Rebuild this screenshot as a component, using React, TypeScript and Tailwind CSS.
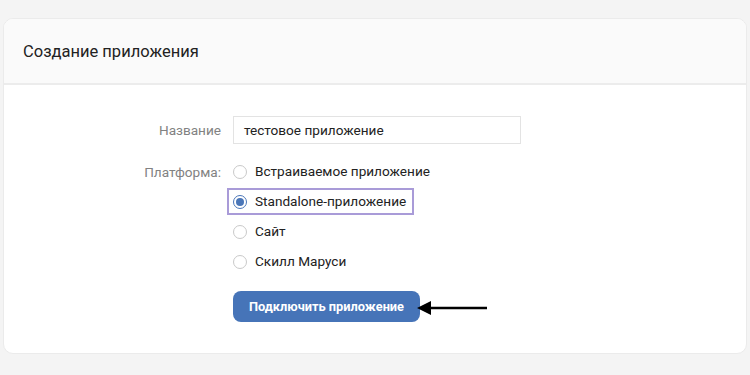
export default function App() {
  const options = [
    { label: 'Встраиваемое приложение', checked: false },
    { label: 'Standalone-приложение', checked: true },
    { label: 'Сайт', checked: false },
    { label: 'Скилл Маруси', checked: false },
  ];

  return (
    <div className="w-[750px] h-[375px] bg-[#f4f4f4] pt-[18px] px-[3px] font-['Roboto',sans-serif] overflow-hidden">
      {/* Card */}
      <div className="w-[744px] h-[336px] bg-white rounded-[10px] border border-[#ebebeb] overflow-hidden">
        <div className="h-[66px] bg-[#fafafa] border-b-2 border-[#ececec] flex items-center pl-[19px] pt-[2px]">
          <h1 className="text-[16.5px] text-[#222] leading-none">Создание приложения</h1>
        </div>

        <div className="pt-[31px] pl-[120px]">
          {/* Name row */}
          <div className="flex items-center">
            <div className="w-[97px] text-right text-[13.6px] text-[#828282]">Название</div>
            <div className="ml-[12px] w-[288px] h-[28px] border border-[#e3e3e3] flex items-center pl-[10px] text-[13.6px] text-[#222]">
              тестовое приложение
            </div>
          </div>

          {/* Platform */}
          <div className="flex mt-[14px]">
            <div className="w-[97px] text-right text-[13.6px] text-[#828282] pt-[4px]">Платформа:</div>
            <div className="ml-[6px] flex flex-col">
              {options.map((o) => (
                <div
                  key={o.label}
                  className={
                    o.checked
                      ? 'flex items-center h-[27px] mb-[3px] px-[4px] w-fit border-2 border-[#a99bd8] pr-[6px]'
                      : 'flex items-center h-[27px] mb-[3px] px-[6px]'
                  }
                >
                  <span
                    className={
                      o.checked
                        ? 'w-[14px] h-[14px] rounded-full border border-[#4a76b8] flex items-center justify-center'
                        : 'w-[14px] h-[14px] rounded-full border border-[#c9c9c9]'
                    }
                  >
                    {o.checked && <span className="w-[8px] h-[8px] rounded-full bg-[#4a76b8]" />}
                  </span>
                  <span className="ml-[8px] text-[13.6px] text-[#222]">{o.label}</span>
                </div>
              ))}
            </div>
          </div>

          {/* Button */}
          <div className="flex items-center mt-[13px] ml-[109px]">
            <button className="w-[187px] h-[31px] rounded-[8px] bg-[#4674b8] text-white text-[12.8px] font-bold">
              Подключить приложение
            </button>
            <svg width="72" height="16" viewBox="0 0 72 16" className="-ml-[3px] mt-[2px]">
              <line x1="10" y1="8" x2="70" y2="8" stroke="#000" strokeWidth="2.5" />
              <polygon points="0,8 14,1 14,15" fill="#000" />
            </svg>
          </div>
        </div>
      </div>
    </div>
  );
}
